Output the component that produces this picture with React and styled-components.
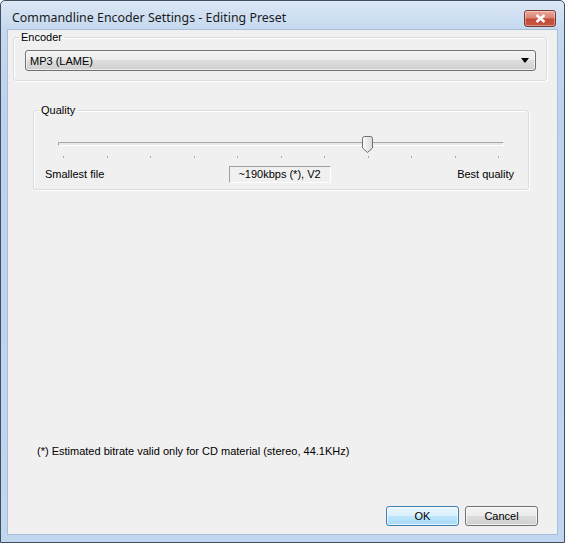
import React from 'react';
import styled, { createGlobalStyle } from 'styled-components';

const GlobalStyle = createGlobalStyle`
  html, body {
    margin: 0;
    padding: 0;
    background: #ffffff;
  }
  body {
    font-family: "Liberation Sans", Arial, sans-serif;
    font-size: 11px;
    color: #000;
  }
`;

const Window = styled.div`
  width: 565px;
  height: 543px;
  box-sizing: border-box;
  border: 1px solid #434e5c;
  border-radius: 5px 5px 0 0;
  background: linear-gradient(#dbe7f5 0px, #c5d9ef 28px, #bcd2ed 120px, #c1d6ef 100%);
  display: flex;
  flex-direction: column;
`;

const TitleBar = styled.div`
  height: 29px;
  box-sizing: border-box;
  padding: 5px 8px 0 11px;
  display: flex;
  align-items: flex-start;
  justify-content: space-between;
`;

const Title = styled.div`
  font-family: "Noto Sans", "Open Sans", sans-serif;
  font-size: 12.4px;
  line-height: 24px;
  color: #1b1b1b;
  white-space: nowrap;
`;

const CloseButton = styled.div`
  margin-top: 4px;
  width: 32px;
  height: 17px;
  box-sizing: border-box;
  border: 1px solid #7b3b33;
  border-radius: 3px;
  background: linear-gradient(#e9a99c 0%, #d98574 45%, #c44a36 55%, #c65a44 100%);
  box-shadow: inset 0 0 0 1px rgba(255, 255, 255, 0.35);
  display: flex;
  align-items: center;
  justify-content: center;
`;

const Client = styled.div`
  flex: 1;
  margin: 0 7px 8px 7px;
  background: #f0f0f0;
  box-shadow: 0 0 0 1px #a9bdd6;
  display: flex;
  flex-direction: column;
`;

const Group = styled.fieldset`
  margin: ${p => p.$top}px ${p => p.$right}px 0 ${p => p.$left}px;
  padding: 0;
  min-width: 0;
  border: 1px solid #d8dcdf;
  border-radius: 3px;
  box-shadow: inset 1px 1px 0 #ffffff, 1px 1px 0 #ffffff;
`;

const Legend = styled.legend`
  margin-left: 5px;
  padding: 0 2px;
  font-size: 11px;
  line-height: 13px;
  height: 13px;
`;

const GroupBody = styled.div`
  padding: ${p => p.$pad};
`;

const Combo = styled.div`
  height: 21px;
  box-sizing: border-box;
  border: 1px solid #707070;
  border-radius: 3px;
  background: linear-gradient(#f2f2f2 0%, #ebebeb 50%, #dddddd 50%, #cfcfcf 100%);
  box-shadow: inset 0 0 0 1px rgba(255, 255, 255, 0.6);
  display: flex;
  align-items: center;
  justify-content: space-between;
  padding: 0 6px 0 4px;
`;

const Slider = styled.div`
  position: relative;
  height: 23px;
  margin: 0 24px;
`;

const Track = styled.div`
  position: relative;
  top: 6px;
  height: 2px;
  border-top: 1px solid #a8a8a8;
  border-left: 1px solid #a8a8a8;
  border-bottom: 1px solid #ffffff;
  border-right: 1px solid #ffffff;
  background: #e8e8e8;
`;

const Ticks = styled.div`
  margin-top: 16px;
  padding: 0 5px;
  display: flex;
  justify-content: space-between;
`;

const Tick = styled.div`
  width: 1px;
  height: 2px;
  background: #a8a8a8;
`;

const Thumb = styled.svg`
  position: absolute;
  top: 0;
  width: 11px;
  height: 17px;
`;

const LabelRow = styled.div`
  margin-top: 7px;
  padding: 0 14px 6px 11px;
  display: grid;
  grid-template-columns: 1fr auto 1fr;
  align-items: center;
`;

const EndLabel = styled.div`
  justify-self: ${p => (p.$right ? 'end' : 'start')};
  line-height: 13px;
`;

const ValueBox = styled.div`
  width: 102px;
  height: 17px;
  box-sizing: border-box;
  border-top: 1px solid #a0a0a0;
  border-left: 1px solid #a0a0a0;
  border-bottom: 1px solid #ffffff;
  border-right: 1px solid #ffffff;
  text-align: center;
  line-height: 15px;
`;

const Spacer = styled.div`
  flex: 1;
`;

const Note = styled.div`
  padding-left: 29px;
  line-height: 13px;
`;

const ButtonRow = styled.div`
  margin-top: 48px;
  padding: 0 19px 8px 0;
  display: flex;
  justify-content: flex-end;
  gap: 6px;
`;

const Button = styled.div`
  width: 73px;
  height: 20px;
  box-sizing: border-box;
  border: 1px solid ${p => (p.$default ? '#3c7fb1' : '#707070')};
  border-radius: 3px;
  background: ${p =>
    p.$default
      ? 'linear-gradient(#eaf6fd 0%, #d9f0fc 50%, #bee6fd 50%, #a7d9f5 100%)'
      : 'linear-gradient(#f2f2f2 0%, #ebebeb 50%, #dddddd 50%, #cfcfcf 100%)'};
  box-shadow: inset 0 0 0 1px rgba(255, 255, 255, 0.7);
  display: flex;
  align-items: center;
  justify-content: center;
`;

const TICKS = 11;
const VALUE = 7;

function QualitySlider() {
  const frac = VALUE / (TICKS - 1);
  return (
    <Slider>
      <Track />
      <Ticks>
        {Array.from({ length: TICKS }, (_, i) => (
          <Tick key={i} />
        ))}
      </Ticks>
      <Thumb
        viewBox="0 0 11 17"
        style={{ left: `calc(5px + (100% - 11px) * ${frac} - 5px)` }}
      >
        <defs>
          <linearGradient id="thumbFill" x1="0" y1="0" x2="1" y2="0">
            <stop offset="0" stopColor="#fbfbfb" />
            <stop offset="1" stopColor="#dadada" />
          </linearGradient>
        </defs>
        <path
          d="M0.5 2.5 Q0.5 0.5 2.5 0.5 H8.5 Q10.5 0.5 10.5 2.5 V12 L5.5 16.5 L0.5 12 Z"
          fill="url(#thumbFill)"
          stroke="#6f6f6f"
        />
      </Thumb>
    </Slider>
  );
}

export default function App() {
  return (
    <>
      <GlobalStyle />
      <Window>
        <TitleBar>
          <Title>Commandline Encoder Settings - Editing Preset</Title>
          <CloseButton>
            <svg width="11" height="9" viewBox="0 0 11 9">
              <path d="M1.5 1 L9.5 8 M9.5 1 L1.5 8" stroke="#ffffff" strokeWidth="2.4" />
            </svg>
          </CloseButton>
        </TitleBar>
        <Client>
          <Group $top={1} $left={5} $right={10}>
            <Legend>Encoder</Legend>
            <GroupBody $pad="6px 10px 9px 11px">
              <Combo>
                <span>MP3 (LAME)</span>
                <svg width="8" height="5" viewBox="0 0 8 5">
                  <path d="M0 0 H8 L4 5 Z" fill="#000" />
                </svg>
              </Combo>
            </GroupBody>
          </Group>
          <Group $top={23} $left={25} $right={28}>
            <Legend>Quality</Legend>
            <GroupBody $pad="19px 0 0 0">
              <QualitySlider />
              <LabelRow>
                <EndLabel>Smallest file</EndLabel>
                <ValueBox>~190kbps (*), V2</ValueBox>
                <EndLabel $right>Best quality</EndLabel>
              </LabelRow>
            </GroupBody>
          </Group>
          <Spacer />
          <Note>(*) Estimated bitrate valid only for CD material (stereo, 44.1KHz)</Note>
          <ButtonRow>
            <Button $default>OK</Button>
            <Button>Cancel</Button>
          </ButtonRow>
        </Client>
      </Window>
    </>
  );
}
